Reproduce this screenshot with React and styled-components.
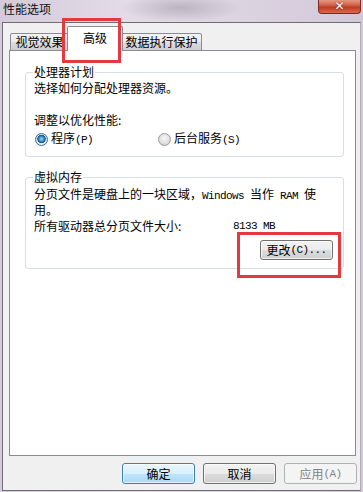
import React from 'react';
import styled, { createGlobalStyle } from 'styled-components';

const Global = createGlobalStyle`
  html, body { margin: 0; padding: 0; background: #d8cfdd; }
  body {
    font-family: "Noto Sans CJK SC", "Liberation Sans", sans-serif;
    font-size: 12px;
    color: #000;
  }
  * { box-sizing: border-box; }
`;

const Window = styled.div`
  position: relative;
  width: 363px;
  height: 492px;
  display: flex;
  flex-direction: column;
  padding: 0 2px 1px 2px;
  overflow: hidden;
  background:
    radial-gradient(ellipse 60px 14px at 180px 8px, rgba(120,115,125,0.35), rgba(120,115,125,0) 100%),
    linear-gradient(90deg, #d5cadb 0%, #e3dce7 35%, #dbd2e0 70%, #d2c7d9 100%);
`;

const TitleBar = styled.div`
  height: 22px;
  display: flex;
  justify-content: space-between;
  align-items: flex-start;
  flex-shrink: 0;
`;

const Title = styled.div`
  padding: 2px 0 0 1px;
  font-size: 12px;
  line-height: 14px;
  color: #111;
`;

const CloseButton = styled.div`
  width: 43px;
  height: 15px;
  margin-top: -1px;
  border: 1px solid #7a2a22;
  border-top: none;
  border-radius: 0 0 4px 4px;
  background: linear-gradient(180deg, #e8a291 0%, #d4674f 40%, #c23b22 60%, #d66a4c 100%);
  display: flex;
  align-items: center;
  justify-content: center;
  color: #fff;
  font-family: "DejaVu Sans", sans-serif;
  font-weight: bold;
  font-size: 12px;
  line-height: 12px;
  text-shadow: 0 0 2px #5a1a12;
`;

const Client = styled.div`
  flex: 1;
  background: #f0f0f0;
  border: 1px solid #6f6c74;
  border-right-color: #b4adb9;
  display: flex;
  flex-direction: column;
  padding: 3px 0 0 6px;
`;

const TabStrip = styled.div`
  display: flex;
  align-items: flex-end;
  height: 25px;
  padding-left: 1px;
  margin-bottom: -1px;
  position: relative;
  z-index: 1;
`;

const Tab = styled.div`
  height: ${p => (p.$active ? 25 : 18)}px;
  width: ${p => p.$w}px;
  margin: 0 ${p => (p.$active ? -2 : 0)}px;
  border: 1px solid #898c95;
  border-bottom: ${p => (p.$active ? 'none' : '1px solid #898c95')};
  border-radius: 2px 2px 0 0;
  background: ${p => (p.$active ? '#fff' : 'linear-gradient(180deg, #f3f3f3 0%, #ebebeb 50%, #dddddd 51%, #cfcfcf 100%)')};
  position: relative;
  z-index: ${p => (p.$active ? 2 : 1)};
  display: flex;
  justify-content: center;
  align-items: flex-start;
  padding-top: ${p => (p.$active ? 4 : 1)}px;
  font-size: 12px;
  line-height: 14px;
  white-space: nowrap;
`;

const Panel = styled.div`
  width: 347px;
  height: 406px;
  background: #fff;
  border: 1px solid #898c95;
  display: flex;
  flex-direction: column;
  padding: 0 10px 0 15px;
`;

const Group = styled.fieldset`
  margin: ${p => p.$top}px 0 0 0;
  width: 319px;
  border: 1px solid #d5dfe5;
  border-radius: 3px;
  padding: 0 8px ${p => p.$bottom}px 8px;
  min-width: 0;
`;

const Legend = styled.legend`
  padding: 0 1px;
  margin-left: -1px;
  font-size: 12px;
  line-height: 14px;
`;

const Line = styled.div`
  font-size: 12px;
  line-height: ${p => p.$lh || 14}px;
  margin-top: ${p => p.$mt || 0}px;
  white-space: nowrap;
`;

const Mono = styled.span`
  font-family: "Liberation Mono", monospace;
  font-size: 11px;
  letter-spacing: -0.6px;
`;

const RadioRow = styled.div`
  display: flex;
  align-items: center;
  margin-top: 5px;
  height: 14px;
`;

const RadioOption = styled.label`
  display: flex;
  align-items: center;
  gap: 3px;
  width: ${p => p.$w || 'auto'};
  font-size: 12px;
  line-height: 14px;
  margin-left: 1px;
`;

const RadioDot = styled.span`
  width: 13px;
  height: 13px;
  border-radius: 50%;
  border: 1px solid ${p => (p.$checked ? '#3d6a8e' : '#9a9a9a')};
  background: ${p =>
    p.$checked
      ? 'radial-gradient(circle at 50% 45%, #a8dcf5 0%, #3c93cf 28%, #1c5482 48%, #dfe6ec 55%, #f6f6f6 100%)'
      : 'radial-gradient(circle at 50% 40%, #f8f8f8 0%, #e2e2e2 50%, #c8c8c8 100%)'};
  flex-shrink: 0;
`;

const SizeRow = styled.div`
  display: grid;
  grid-template-columns: 199px auto;
  margin-top: 3px;
  line-height: 14px;
  white-space: nowrap;
`;

const ButtonRow = styled.div`
  display: flex;
  justify-content: flex-end;
  gap: ${p => p.$gap || 8}px;
  width: ${p => p.$w || 'auto'};
  margin-top: ${p => p.$mt || 0}px;
  padding-right: ${p => p.$pr || 0}px;
`;

const Button = styled.div`
  width: 73px;
  height: ${p => p.$h || 21}px;
  border: 1px solid ${p => (p.$default ? '#3c7fb1' : p.$disabled ? '#adb2b5' : '#707070')};
  border-radius: 3px;
  background: ${p =>
    p.$default
      ? 'linear-gradient(180deg, #eaf6fd 0%, #d9f0fc 50%, #bee6fd 51%, #a7d9f5 100%)'
      : p.$disabled
      ? '#f4f4f4'
      : 'linear-gradient(180deg, #f2f2f2 0%, #ebebeb 50%, #dddddd 51%, #cfcfcf 100%)'};
  box-shadow: ${p => (p.$disabled ? 'none' : 'inset 0 0 0 1px rgba(255,255,255,0.7)')};
  color: ${p => (p.$disabled ? '#838383' : '#000')};
  display: flex;
  align-items: center;
  justify-content: center;
  font-size: 12px;
  line-height: 14px;
  white-space: nowrap;
`;

const Highlight = styled.div`
  position: absolute;
  left: ${p => p.$x}px;
  top: ${p => p.$y}px;
  width: ${p => p.$w}px;
  height: ${p => p.$h}px;
  border: 3px solid #e3393f;
  pointer-events: none;
  z-index: 5;
`;

export default function App() {
  return (
    <>
      <Global />
      <Window>
        <TitleBar>
          <Title>性能选项</Title>
          <CloseButton>✕</CloseButton>
        </TitleBar>
        <Client>
          <TabStrip>
            <Tab $w={59}>视觉效果</Tab>
            <Tab $w={56} $active>高级</Tab>
            <Tab $w={81}>数据执行保护</Tab>
          </TabStrip>
          <Panel>
            <Group $top={14} $bottom={10}>
              <Legend>处理器计划</Legend>
              <Line $mt={2}>选择如何分配处理器资源。</Line>
              <Line $mt={18}>调整以优化性能:</Line>
              <RadioRow>
                <RadioOption $w="122px">
                  <RadioDot $checked />
                  <span>程序<Mono>(P)</Mono></span>
                </RadioOption>
                <RadioOption>
                  <RadioDot />
                  <span>后台服务<Mono>(S)</Mono></span>
                </RadioOption>
              </RadioRow>
            </Group>
            <Group $top={13} $bottom={8}>
              <Legend>虚拟内存</Legend>
              <Line $mt={3} $lh={13}>
                分页文件是硬盘上的一块区域，<Mono>Windows </Mono>当作<Mono> RAM </Mono>使
                <br />
                用。
              </Line>
              <SizeRow>
                <span>所有驱动器总分页文件大小:</span>
                <Mono>8133 MB</Mono>
              </SizeRow>
              <ButtonRow $mt={7} $pr={2}>
                <Button $h={20}>更改<Mono>(C)...</Mono></Button>
              </ButtonRow>
            </Group>
          </Panel>
          <ButtonRow $mt={7} $w="348px">
            <Button $default>确定</Button>
            <Button>取消</Button>
            <Button $disabled>应用<Mono>(A)</Mono></Button>
          </ButtonRow>
        </Client>
        <Highlight $x={62} $y={18} $w={59} $h={45} />
        <Highlight $x={237} $y={232} $w={104} $h={46} />
      </Window>
    </>
  );
}
